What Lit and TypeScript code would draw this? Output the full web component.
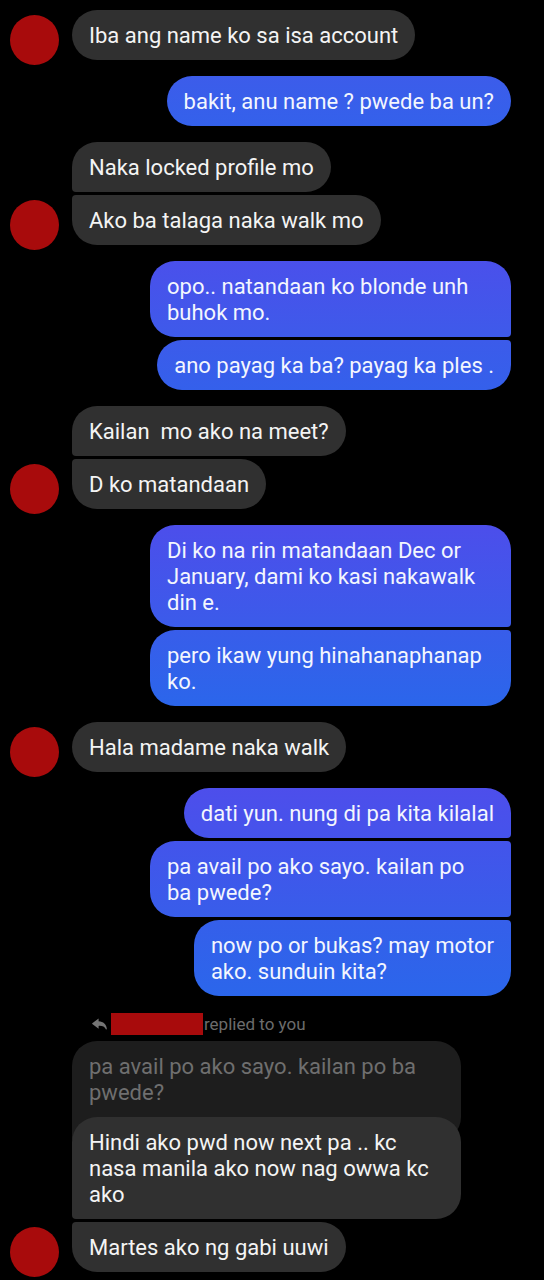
import { LitElement, html, css, nothing } from "lit";
import { customElement, property } from "lit/decorators.js";
import { classMap } from "lit/directives/class-map.js";
import { styleMap } from "lit/directives/style-map.js";

interface Message {
  text: string;
  /** Text of the earlier message this one answers. */
  quote?: string;
  /** Top and bottom tint of a sent bubble. */
  tint?: [string, string];
}

interface Group {
  from: "them" | "me";
  messages: Message[];
}

const CONVERSATION: Group[] = [
  { from: "them", messages: [{ text: "Iba ang name ko sa isa account" }] },
  {
    from: "me",
    messages: [{ text: "bakit, anu name ? pwede ba un?", tint: ["#3c5cea", "#3461eb"] }],
  },
  {
    from: "them",
    messages: [{ text: "Naka locked profile mo" }, { text: "Ako ba talaga naka walk mo" }],
  },
  {
    from: "me",
    messages: [
      { text: "opo.. natandaan ko blonde unh buhok mo.", tint: ["#4a50eb", "#3e5aea"] },
      { text: "ano payag ka ba? payag ka ples .", tint: ["#3c5bea", "#3460eb"] },
    ],
  },
  {
    from: "them",
    messages: [{ text: "Kailan  mo ako na meet?" }, { text: "D ko matandaan" }],
  },
  {
    from: "me",
    messages: [
      {
        text: "Di ko na rin matandaan Dec or January, dami ko kasi nakawalk din e.",
        tint: ["#4c4eeb", "#3b5bea"],
      },
      { text: "pero ikaw yung hinahanaphanap ko.", tint: ["#385dea", "#2b66eb"] },
    ],
  },
  { from: "them", messages: [{ text: "Hala madame naka walk" }] },
  {
    from: "me",
    messages: [
      { text: "dati yun. nung di pa kita kilalal", tint: ["#4d4eeb", "#4553eb"] },
      { text: "pa avail po ako sayo. kailan po ba\u00a0pwede?", tint: ["#4354eb", "#385dea"] },
      { text: "now po or bukas? may motor\nako. sunduin kita?", tint: ["#355fea", "#2b66eb"] },
    ],
  },
  {
    from: "them",
    messages: [
      {
        text: "Hindi ako pwd now next pa .. kc nasa manila ako now nag owwa kc ako",
        quote: "pa avail po ako sayo. kailan po ba pwede?",
      },
      { text: "Martes ako ng gabi uuwi" },
    ],
  },
];

@customElement("chat-group")
class ChatGroup extends LitElement {
  @property({ attribute: false }) group!: Group;

  static styles = css`
    :host {
      display: block;
    }
    .group {
      display: grid;
      grid-template-columns: 49px minmax(0, 1fr);
      column-gap: 13px;
      padding: 0 33px 0 10px;
    }
    .avatar {
      align-self: end;
      height: 50px;
      margin-bottom: -5px;
      border-radius: 50%;
      background: #a80b0c;
    }
    .stack {
      grid-column: 2;
      display: flex;
      flex-direction: column;
      align-items: flex-start;
      gap: 3px;
      margin: 0;
      padding: 0;
      list-style: none;
    }
    .item {
      display: flex;
      flex-direction: column;
      max-width: 389px;
    }
    .bubble {
      margin: 0;
      padding: 13px 17px 11px;
      border-radius: 25px;
      background: #303030;
      color: #f4f4f4;
      white-space: pre-wrap;
    }
    .joined-below {
      border-bottom-left-radius: 4px;
    }
    .joined-above {
      border-top-left-radius: 4px;
    }
    .mine .stack {
      align-items: flex-end;
    }
    .mine .item {
      max-width: 361px;
    }
    .mine .bubble {
      background: linear-gradient(var(--tint-top), var(--tint-bottom));
      color: #f3f6fe;
    }
    .mine .joined-below {
      border-bottom-left-radius: 25px;
      border-bottom-right-radius: 4px;
    }
    .mine .joined-above {
      border-top-left-radius: 25px;
      border-top-right-radius: 4px;
    }
    .reply-note {
      display: flex;
      align-items: center;
      height: 24px;
      margin: 0 0 5px;
      padding-left: 20px;
      color: #6c6c6c;
      font-size: 17px;
      line-height: 20px;
    }
    .reply-icon {
      width: 15px;
      height: 12px;
      margin-right: 4px;
      fill: #757575;
    }
    .hidden-name {
      width: 92px;
      height: 22px;
      margin-right: 1px;
      background: #a80b0c;
    }
    .quote {
      margin: 0 0 -25px;
      padding: 13px 17px 36px;
      border-radius: 25px 25px 25px 4px;
      background: #1d1d1d;
      color: #6f6f6f;
    }
  `;

  private renderMessage(message: Message, index: number) {
    const last = this.group.messages.length - 1;
    const classes = classMap({
      bubble: true,
      "joined-above": index > 0,
      "joined-below": index < last,
    });
    const tint = styleMap(
      message.tint ? { "--tint-top": message.tint[0], "--tint-bottom": message.tint[1] } : {},
    );
    return html`<li class="item">
      ${message.quote === undefined
        ? nothing
        : html`<p class="reply-note">
              <svg class="reply-icon" viewBox="0 0 15 12" aria-hidden="true">
                <path
                  d="M6.6 0.4 0.3 5.2Q-0.1 5.6 0.3 6L6.6 10.8V7.9C10 7.6 12.6 8.6 14 11.5Q14.9 11.8 14.8 10.6C14.4 6.2 11.4 3.5 6.6 3.2Z"
                />
              </svg>
              <span class="hidden-name"></span>
              <span>replied to you</span>
            </p>
            <blockquote class="quote">${message.quote}</blockquote>`}
      <p class=${classes} style=${tint}>${message.text}</p>
    </li>`;
  }

  render() {
    const mine = this.group.from === "me";
    return html`<section class=${classMap({ group: true, mine })}>
      ${mine ? nothing : html`<span class="avatar"></span>`}
      <ul class="stack">
        ${this.group.messages.map((message, index) => this.renderMessage(message, index))}
      </ul>
    </section>`;
  }
}

@customElement("app-root")
class AppRoot extends LitElement {
  static styles = css`
    :host {
      display: block;
      box-sizing: border-box;
      min-height: 100vh;
      background: #000;
      font-family: Roboto, "Liberation Sans", sans-serif;
      font-size: 22px;
      line-height: 26px;
    }
    .thread {
      display: flex;
      flex-direction: column;
      gap: 16px;
      padding: 10px 0 8px;
    }
  `;

  render() {
    return html`<main class="thread">
      ${CONVERSATION.map((group) => html`<chat-group .group=${group}></chat-group>`)}
    </main>`;
  }
}
